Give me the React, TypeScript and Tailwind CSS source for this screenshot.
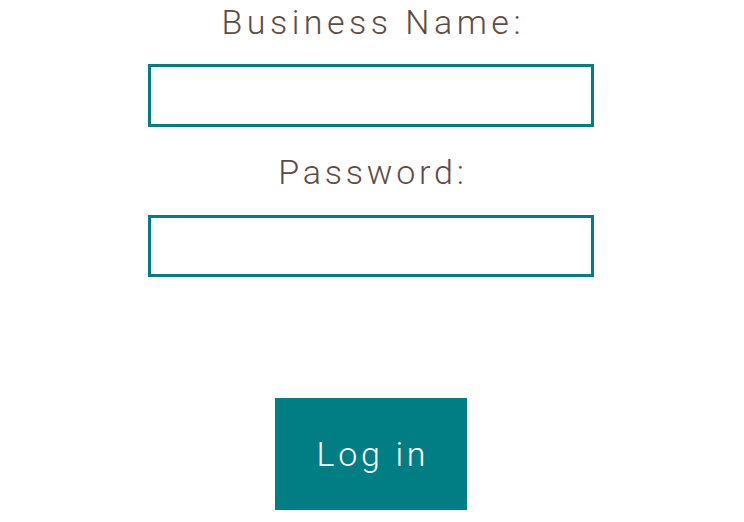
import React from 'react';

const App: React.FC = () => {
    return (
        <div className="min-h-screen bg-white flex flex-col items-center pr-[2px]" style={{ fontFamily: 'Roboto, "Liberation Sans", sans-serif' }}>
            <label className="h-[44px] text-[34px] leading-[44px] font-light tracking-[4.5px] pl-[4.5px] text-[#5d4c46]">Business Name:</label>
            <input type="text" className="mt-[20px] w-[446px] h-[63px] border-[3px] border-[#017d84] bg-white outline-none" />
            <label className="mt-[23px] h-[44px] text-[34px] leading-[44px] font-light tracking-[3.8px] pl-[3.8px] text-[#5d4c46]">Password:</label>
            <input type="password" className="mt-[21px] w-[446px] h-[62px] border-[3px] border-[#017d84] bg-white outline-none" />
            <button className="mt-[121px] w-[192px] h-[112px] bg-[#017d84] text-white text-[34px] font-light tracking-[3.7px] pl-[3.7px]">Log in</button>
        </div>
    );
}

export default App;
